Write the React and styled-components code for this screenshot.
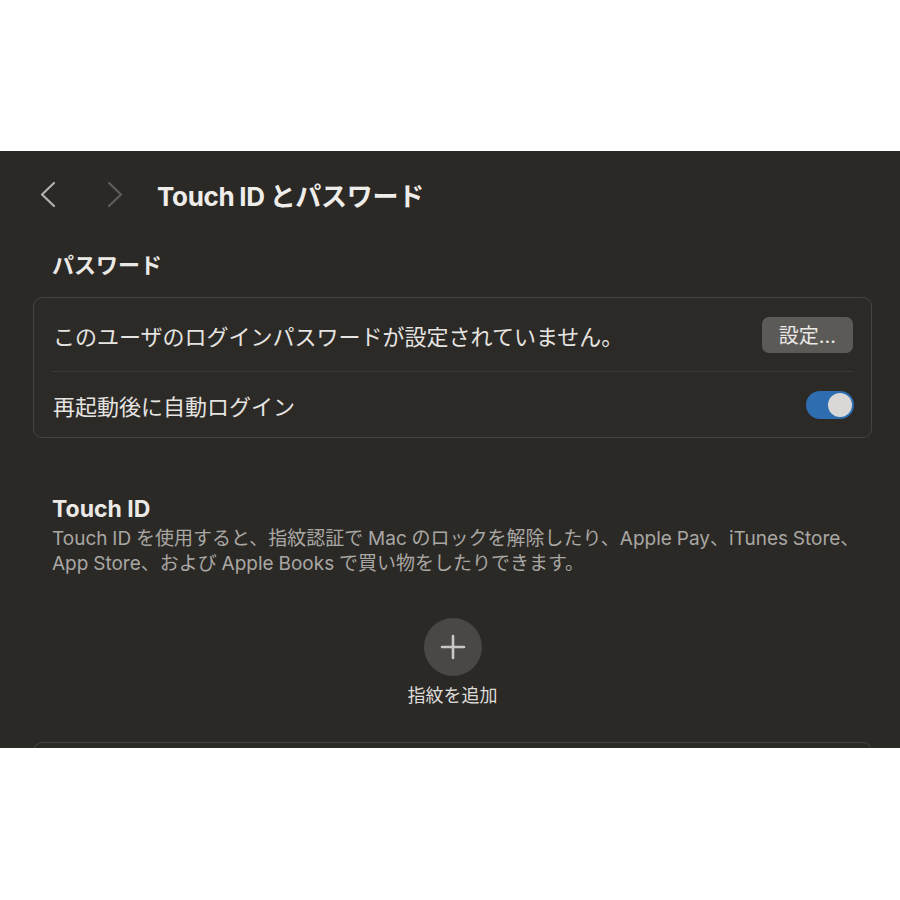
import React from "react";
import styled, { createGlobalStyle } from "styled-components";

const Global = createGlobalStyle`
  html, body { margin: 0; padding: 0; background: #ffffff; }
  body { font-family: Inter, "Noto Sans CJK JP", sans-serif; }
`;

const Page = styled.div`
  padding-top: 151px;
  width: 900px;
`;

const Window = styled.div`
  background: #2b2926;
  height: 597px;
  overflow: hidden;
  padding: 0 28px 0 33px;
  box-sizing: border-box;
  color: #e8e6e3;
  font-family: Inter, "Noto Sans CJK JP", sans-serif;
`;

const Header = styled.div`
  display: flex;
  align-items: center;
  height: 86px;
  padding-left: 5px;
`;

const NavButton = styled.button`
  background: none;
  border: none;
  padding: 0;
  width: 20px;
  height: 28px;
  display: flex;
  align-items: center;
  justify-content: center;
  color: ${(p) => (p.$disabled ? "#5f5d5a" : "#b3b1ae")};
  margin-right: ${(p) => p.$mr || 0}px;
`;

const Title = styled.h1`
  margin: 0;
  font-size: 26px;
  font-weight: 700;
  color: #efedea;
  letter-spacing: -0.3px;
  word-spacing: -1px;
`;

const SectionTitle = styled.h2`
  margin: ${(p) => p.$mt || 0}px 0 0 19px;
  font-size: ${(p) => p.$fs || 22}px;
  font-weight: 700;
  color: #ebe9e6;
  line-height: 28px;
`;

const Card = styled.div`
  border: 1px solid #45433f;
  border-radius: 9px;
  background: #2c2a27;
  margin-top: ${(p) => p.$mt || 0}px;
  padding: 0 18px;
  height: ${(p) => (p.$h ? `${p.$h}px` : "auto")};
`;

const Row = styled.div`
  display: flex;
  align-items: center;
  justify-content: space-between;
  height: ${(p) => p.$h}px;
  border-top: ${(p) => (p.$divider ? "1px solid #3d3b38" : "none")};
`;

const RowLabel = styled.span`
  font-size: 22px;
  color: #e6e4e1;
  margin-left: 1px;
`;

const PillButton = styled.button`
  background: #5c5a57;
  border: none;
  border-radius: 7px;
  height: 36px;
  width: 91px;
  color: #ebe9e6;
  font-size: 20px;
  font-family: Inter, "Noto Sans CJK JP", sans-serif;
  padding: 0;
  display: flex;
  align-items: center;
  justify-content: center;
`;

const Toggle = styled.div`
  width: 48px;
  height: 28px;
  border-radius: 14px;
  background: #2e6db0;
  display: flex;
  align-items: center;
  justify-content: ${(p) => (p.$on ? "flex-end" : "flex-start")};
  padding: 2px;
  box-sizing: border-box;
  margin-right: -1px;
`;

const Knob = styled.div`
  width: 24px;
  height: 24px;
  border-radius: 50%;
  background: #d9d8d7;
`;

const Description = styled.p`
  margin: 3px 0 0 19px;
  font-size: 19px;
  line-height: 25px;
  color: #a9a7a3;
  word-spacing: -0.5px;
`;

const AddArea = styled.div`
  display: flex;
  flex-direction: column;
  align-items: center;
  margin-top: 42px;
`;

const AddCircle = styled.div`
  width: 58px;
  height: 58px;
  border-radius: 50%;
  background: #4a4845;
  display: flex;
  align-items: center;
  justify-content: center;
`;

const AddLabel = styled.span`
  margin-top: 8px;
  font-size: 18px;
  color: #dedcd9;
  line-height: 24px;
`;

const Chevron = ({ dir }) => (
  <svg width="18" height="27" viewBox="0 0 18 27" fill="none">
    <path
      d={dir === "left" ? "M15 2 L3 13.5 L15 25" : "M3 2 L15 13.5 L3 25"}
      stroke="currentColor"
      strokeWidth="2.2"
      strokeLinecap="round"
      strokeLinejoin="round"
    />
  </svg>
);

export default function App() {
  return (
    <>
      <Global />
      <Page>
        <Window>
          <Header>
            <NavButton $mr={47}>
              <Chevron dir="left" />
            </NavButton>
            <NavButton $disabled $mr={32}>
              <Chevron dir="right" />
            </NavButton>
            <Title>Touch ID とパスワード</Title>
          </Header>
          <SectionTitle $mt={14}>パスワード</SectionTitle>
          <Card $mt={18}>
            <Row $h={73}>
              <RowLabel>このユーザのログインパスワードが設定されていません。</RowLabel>
              <PillButton>設定...</PillButton>
            </Row>
            <Row $h={65} $divider>
              <RowLabel>再起動後に自動ログイン</RowLabel>
              <Toggle $on>
                <Knob />
              </Toggle>
            </Row>
          </Card>
          <SectionTitle $mt={57} $fs={23}>Touch ID</SectionTitle>
          <Description>
            Touch ID を使用すると、指紋認証で Mac のロックを解除したり、Apple Pay、iTunes Store、
            <br />
            App Store、および Apple Books で買い物をしたりできます。
          </Description>
          <AddArea>
            <AddCircle>
              <svg width="28" height="28" viewBox="0 0 28 28">
                <path d="M14 3 V25 M3 14 H25" stroke="#c9c8c6" strokeWidth="2.6" strokeLinecap="round" />
              </svg>
            </AddCircle>
            <AddLabel>指紋を追加</AddLabel>
          </AddArea>
          <Card $mt={34} $h={60} />
        </Window>
      </Page>
    </>
  );
}
